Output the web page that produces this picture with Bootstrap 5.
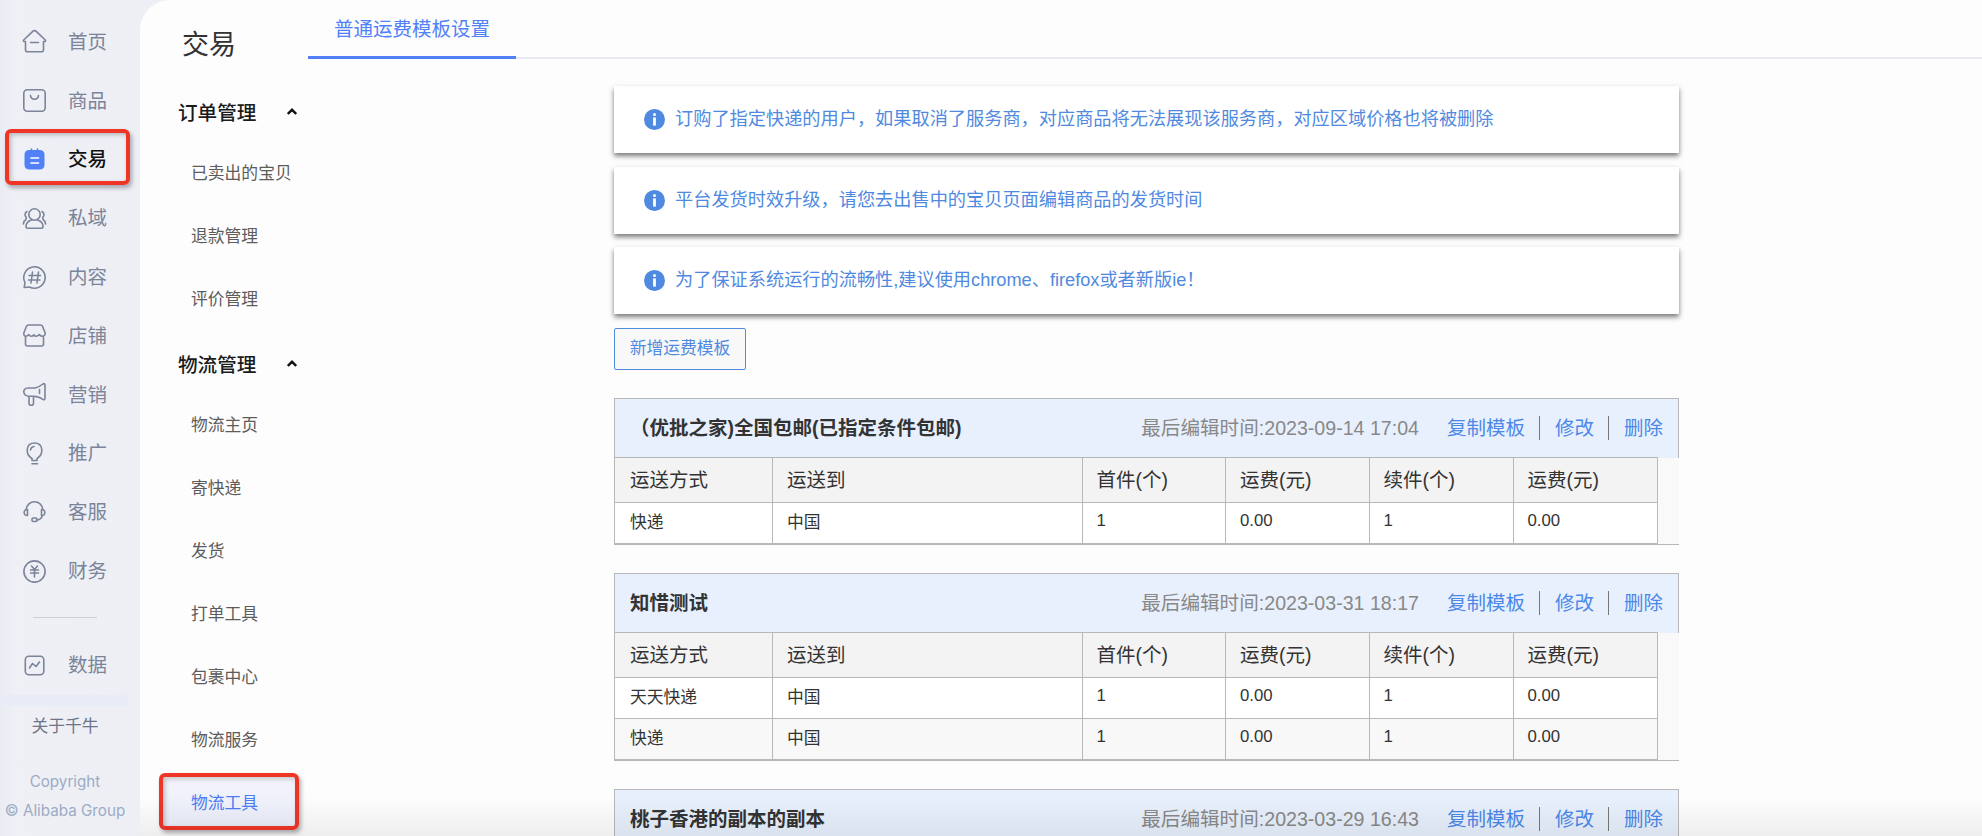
<!DOCTYPE html>
<html lang="zh-CN">
<head>
<meta charset="utf-8">
<title>普通运费模板设置</title>
<link rel="stylesheet" href="https://cdn.jsdelivr.net/npm/bootstrap@5.3.0/dist/css/bootstrap.min.css">
<style>
body{font-family:"Liberation Sans","Noto Sans CJK SC",sans-serif;background:#edeff5;height:836px;overflow:hidden;color:#333;line-height:1.3}
.side{width:140px;background:linear-gradient(90deg,#e9ecf3,#eef0f5 12%,#edeff5);padding-top:13px;position:relative}
.side-item{height:58.8px;padding-left:23px;font-size:19.5px;color:#7b8499;gap:22px;text-decoration:none;white-space:nowrap}
.side-item svg{width:23px;height:23px;flex:none;margin-top:-1px;fill:none;stroke:#7b8499;stroke-width:1.6;stroke-linecap:round;stroke-linejoin:round;overflow:visible}
.side-item.on{color:#111;font-weight:500}
.side-line{width:64px;height:1px;background:#cdcfd5;margin:16px 0 18.5px 33px}
.strip{width:126px;height:11px;background:#e8ecf6;margin-left:2px}
.about{font-size:16.8px;color:#6e7588;width:130px;margin-top:10px}
.copy{font-family:Inter,sans-serif;font-size:15.2px;color:#9cabc6;width:130px;line-height:28.5px;margin-top:30px;white-space:nowrap}
.hl{position:absolute;border:4px solid #ee3526;border-radius:6px;box-shadow:2px 3px 4px rgba(60,60,70,.4),inset 2px 2px 4px rgba(60,60,70,.3);pointer-events:none}
.hl-side{left:5px;top:129px;width:125px;height:56px}
.hl-menu{left:19px;top:773px;width:140px;height:57px}
.main-area{background:#fdfdfd;border-top-left-radius:30px;position:relative;overflow:hidden}
.menu{width:168px;position:relative;white-space:nowrap}
.menu-title{font-size:27px;padding:28px 0 0 42px;height:82px}
.group{font-size:19.6px;font-weight:500;color:#1b1b1b;height:63px;padding:0 11px 0 38px}
.group svg{width:10px;height:7px;fill:none;stroke:#111;stroke-width:2.4;margin-top:-4px}
.entry{height:63px;font-size:16.8px;color:#5c5c5c;padding:0 0 5px 51px;text-decoration:none}
.entry.on{color:#4c7cf5;background:linear-gradient(#f2f3fb,#eceffb) no-repeat 21px 4px/134px 50px}
.tabs{height:59px;box-shadow:inset 0 -2px #e8eaf1}
.tabs a{width:208px;height:59px;border-bottom:3px solid #5180f8;color:#5180f8;font-size:19.5px;text-decoration:none;padding-top:4px}
.col-main{width:1065px;margin:27px 0 0 306px}
.notice{height:67px;background:#fff;color:#4f8ae0;font-size:18.2px;padding:0 0 0 30px;margin-bottom:13.6px;gap:10px;box-shadow:0 3px 5px rgba(0,0,0,.52);white-space:nowrap}
.notice svg{width:21px;height:21px;flex:none}
.notice span{padding-top:1px}
.btn-add{width:132px;height:42px;border:1px solid #4f8ae0;border-radius:2px;background:#f8f8f8;color:#4f8ae0;font-size:16.8px;padding:0;white-space:nowrap;margin-bottom:28px;display:block}
.tpl{border-left:1px solid #b8b8b8;margin-bottom:28px;background:#f9f9f9;border-bottom:1px solid #b8b8b8}
.tpl-head{height:60px;background:#e8f0fd;border-top:1px solid #b8b8b8;border-right:1px solid #b8b8b8;padding:0 15px;font-size:19.5px;white-space:nowrap}
.tpl-head a{color:#4c88e8;text-decoration:none}
.stamp{color:#888;margin-right:28px;font-size:19.6px}
.bar-sep{width:1px;height:24px;background:#777;margin:0 14.5px}
.grid{width:1042px;table-layout:fixed;border-collapse:collapse;margin:-1px 0 0;border-color:#b8b8b8}
.grid th,.grid td{border:1px solid #b8b8b8;padding:0 15px 0 14px;vertical-align:middle;color:#333;white-space:nowrap;line-height:24px}
.grid th:first-child,.grid td:first-child{border-left:0;padding-left:15px}
.grid th{height:45px;font-size:19.5px;font-weight:400;background:#f3f3f3}
.grid td{height:41px;font-size:16.8px;background:#fff}
.grid td.num{padding-bottom:4px}
.grid .alt td{background:#f8f8f8}
.shade{position:absolute;left:0;right:0;bottom:0;height:40px;background:linear-gradient(rgba(0,0,0,0),rgba(0,0,0,.06));pointer-events:none}
</style>
</head>
<body class="d-flex">
<svg width="0" height="0" class="position-absolute">
<symbol id="info" viewBox="0 0 21 21"><circle cx="10.5" cy="10.5" r="10.5" fill="#4f8ae0"/><circle cx="10.5" cy="5.600" r="1.500" fill="#fff"/><path d="M10.500 8.400v8.200" stroke="#fff" stroke-width="2.800"/></symbol>
<symbol id="caret" viewBox="0 0 10 7"><path d="M.8 6 5 1.800 9.200 6"/></symbol>
</svg>
<nav class="side flex-shrink-0">
<a href="#" class="side-item d-flex align-items-center"><svg viewBox="0 0 23 23"><path d="M2.500 11.500v8.200a2 2 0 0 0 2 2h14a2 2 0 0 0 2-2v-8.200h1.300c1 0 1-1 .5-1.500L13 1.200q-1.500-1.200-3 0L.7 10c-.5.500-.5 1.500.5 1.500zM7.500 12.500h8"/></svg>首页</a>
<a href="#" class="side-item d-flex align-items-center"><svg viewBox="0 0 23 23"><rect x=".8" y=".8" width="21.400" height="21.400" rx="3.500"/><path d="M7.500 6.500c.5 5 7.500 5 8 0"/></svg>商品</a>
<a href="#" class="side-item on d-flex align-items-center"><svg viewBox="0 0 23 23"><path d="M6.500 2h10q5 0 5 5v9.500q0 5-5 5h-10q-5 0-5-5V7q0-5 5-5z" fill="#5180f8" stroke="none"/><path d="M8.500 1v3M14.500 1v3" stroke="#5180f8"/><path d="M8 10h7.500M8 15h7.500" stroke="#fff" stroke-width="1.700"/></svg>交易</a>
<a href="#" class="side-item d-flex align-items-center"><svg viewBox="0 0 23 23"><circle cx="11.500" cy="7.500" r="5.700"/><path d="M8.500 13c-3.500 1-5.500 3.500-5.500 6.500 0 1 .7 1.700 1.700 1.700h13.600c1 0 1.700-.7 1.700-1.700 0-3-2-5.500-5.500-6.500M4 4.500C1.500 6 1.500 8.500 3.300 10.500L3 12.500C1.300 13.500.5 15 .4 17M19 4.500c2.500 1.500 2.500 4 .7 6l.3 2c1.700 1 2.500 2.500 2.600 4.500"/></svg>私域</a>
<a href="#" class="side-item d-flex align-items-center"><svg viewBox="0 0 23 23"><path d="M1.200 21.500 2 16.500A10.700 10.700 0 1 1 6.500 21zM9.500 6l-1.500 11M15.500 6 14 17M6 9.500h11.500M5.500 14H17"/></svg>内容</a>
<a href="#" class="side-item d-flex align-items-center"><svg viewBox="0 0 23 23"><path d="M5.500 1h12q1.500 0 2 1.300L22 8.500c.8 2-.7 3.800-2.500 3.800-1.500 0-2.500-.8-3.300-1.700-1 1.200-2 1.700-3 1.700s-1.700-.5-2.200-1.500c-.7 1-1.700 1.500-2.700 1.500s-1.800-.5-2.500-1.700C5 11.600 4.300 12.300 3 12.300 1.200 12.300.200 10.500 1 8.500l2.500-6.200Q4 1 5.500 1zM2.500 13v7q0 2 2 2h14q2 0 2-2v-7"/></svg>店铺</a>
<a href="#" class="side-item d-flex align-items-center"><svg viewBox="0 0 23 23"><path d="M5 5h7c3-.5 5.500-2 8-4 1-.7 2-.3 2 1v13.500c0 1-1 1.500-2 1-2.500-2-5-3-9.500-3.300v7q0 2-2 2H8q-2 0-2-2v-7C-.5 13-1 5 5 5zM6 13.200h4.500M16.500 6.500v4"/></svg>营销</a>
<a href="#" class="side-item d-flex align-items-center"><svg viewBox="0 0 23 23"><path d="M9 18.500v-2C2 12.500 2.500 1 11.500 1s9.500 11.500 2.500 15.500v2zM9 21.700h5.500M7.500 8c.3-2 1.700-3.300 3.500-3.500"/></svg>推广</a>
<a href="#" class="side-item d-flex align-items-center"><svg viewBox="0 0 23 23"><path d="M3 9C4-2 19-2 20 9M4.500 8.500v6C0 15 0 8 4.500 8.500zM18.500 8.500v6C23 15 23 8 18.500 8.500zM19.500 14.500c-1 3-3 4.500-6 4.500"/><rect x="9" y="17" width="5" height="3.500" rx="1.200"/></svg>客服</a>
<a href="#" class="side-item d-flex align-items-center"><svg viewBox="0 0 23 23"><circle cx="11.500" cy="11.500" r="10.600"/><path d="m8.500 6 3 3.500L14.500 6M7.500 10h8M7.500 13h8M11.500 10v7"/></svg>财务</a>
<div class="side-line"></div>
<a href="#" class="side-item d-flex align-items-center"><svg viewBox="0 0 23 23"><rect x="2.300" y="2.300" width="18.500" height="18.500" rx="3.500"/><path d="m6.500 14 3-4.500 3.500 3L16.500 8"/></svg>数据</a>
<div class="strip"></div>
<div class="about text-center">关于千牛</div>
<div class="copy text-center">Copyright<br>© Alibaba Group</div>
<div class="hl hl-side"></div>
</nav>
<div class="main-area d-flex flex-grow-1">
<aside class="menu flex-shrink-0">
<div class="menu-title">交易</div>
<div class="group d-flex align-items-center justify-content-between">订单管理<svg><use href="#caret"/></svg></div>
<a href="#" class="entry d-flex align-items-center">已卖出的宝贝</a>
<a href="#" class="entry d-flex align-items-center">退款管理</a>
<a href="#" class="entry d-flex align-items-center">评价管理</a>
<div class="group d-flex align-items-center justify-content-between">物流管理<svg><use href="#caret"/></svg></div>
<a href="#" class="entry d-flex align-items-center">物流主页</a>
<a href="#" class="entry d-flex align-items-center">寄快递</a>
<a href="#" class="entry d-flex align-items-center">发货</a>
<a href="#" class="entry d-flex align-items-center">打单工具</a>
<a href="#" class="entry d-flex align-items-center">包裹中心</a>
<a href="#" class="entry d-flex align-items-center">物流服务</a>
<a href="#" class="entry on d-flex align-items-center">物流工具</a>
<div class="hl hl-menu"></div>
</aside>
<main class="flex-grow-1">
<div class="tabs"><a href="#" class="d-flex align-items-center justify-content-center">普通运费模板设置</a></div>
<div class="col-main">
<div class="notice d-flex align-items-center"><svg><use href="#info"/></svg><span>订购了指定快递的用户，如果取消了服务商，对应商品将无法展现该服务商，对应区域价格也将被删除</span></div>
<div class="notice d-flex align-items-center"><svg><use href="#info"/></svg><span>平台发货时效升级，请您去出售中的宝贝页面编辑商品的发货时间</span></div>
<div class="notice d-flex align-items-center"><svg><use href="#info"/></svg><span>为了保证系统运行的流畅性,建议使用chrome、firefox或者新版ie！</span></div>
<button class="btn-add">新增运费模板</button>

<section class="tpl">
<div class="tpl-head d-flex align-items-center"><strong class="me-auto">（优批之家)全国包邮(已指定条件包邮)</strong><span class="stamp">最后编辑时间:2023-09-14 17:04</span><a href="#">复制模板</a><i class="bar-sep"></i><a href="#">修改</a><i class="bar-sep"></i><a href="#">删除</a></div>
<table class="grid"><colgroup><col style="width:157.500px"><col style="width:309.500px"><col style="width:143.500px"><col style="width:143.500px"><col style="width:144px"><col style="width:144px"></colgroup>
<tr><th>运送方式</th><th>运送到</th><th>首件(个)</th><th>运费(元)</th><th>续件(个)</th><th>运费(元)</th></tr>
<tr><td>快递</td><td>中国</td><td class="num">1</td><td class="num">0.00</td><td class="num">1</td><td class="num">0.00</td></tr>
</table>
</section>

<section class="tpl">
<div class="tpl-head d-flex align-items-center"><strong class="me-auto">知惜测试</strong><span class="stamp">最后编辑时间:2023-03-31 18:17</span><a href="#">复制模板</a><i class="bar-sep"></i><a href="#">修改</a><i class="bar-sep"></i><a href="#">删除</a></div>
<table class="grid"><colgroup><col style="width:157.500px"><col style="width:309.500px"><col style="width:143.500px"><col style="width:143.500px"><col style="width:144px"><col style="width:144px"></colgroup>
<tr><th>运送方式</th><th>运送到</th><th>首件(个)</th><th>运费(元)</th><th>续件(个)</th><th>运费(元)</th></tr>
<tr><td>天天快递</td><td>中国</td><td class="num">1</td><td class="num">0.00</td><td class="num">1</td><td class="num">0.00</td></tr>
<tr class="alt"><td>快递</td><td>中国</td><td class="num">1</td><td class="num">0.00</td><td class="num">1</td><td class="num">0.00</td></tr>
</table>
</section>

<section class="tpl">
<div class="tpl-head d-flex align-items-center"><strong class="me-auto">桃子香港的副本的副本</strong><span class="stamp">最后编辑时间:2023-03-29 16:43</span><a href="#">复制模板</a><i class="bar-sep"></i><a href="#">修改</a><i class="bar-sep"></i><a href="#">删除</a></div>
</section>
</div>
</main>
<div class="shade"></div>
</div>
<script src="https://cdn.jsdelivr.net/npm/bootstrap@5.3.0/dist/js/bootstrap.bundle.min.js"></script>
</body>
</html>
